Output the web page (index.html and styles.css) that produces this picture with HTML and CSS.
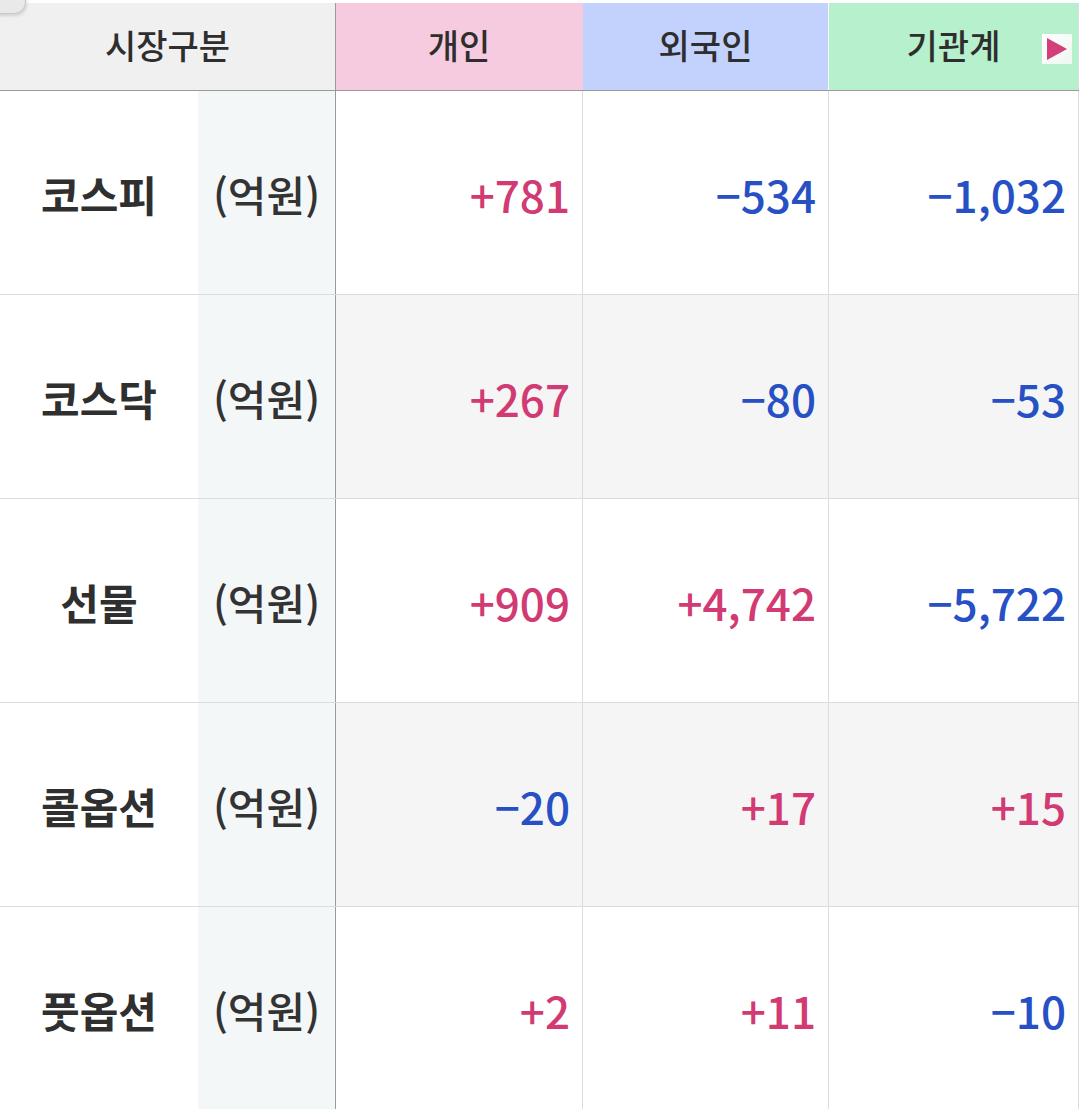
FILE: index.html
```html
<!DOCTYPE html>
<html lang="ko">
<head>
<meta charset="utf-8">
<title>투자자별 매매동향</title>
<link rel="stylesheet" href="styles.css">
</head>
<body>
<div class="board">
  <div class="corner"></div>
  <div class="row head">
    <div class="cell hd market">시장구분</div>
    <div class="cell hd indiv">개인</div>
    <div class="cell hd foreign">외국인</div>
    <div class="cell hd inst">기관계<span class="next"><svg viewBox="0 0 30 30" width="30" height="30"><polygon points="5,4 25,15 5,26" fill="#d33f79"/></svg></span></div>
  </div>
  <div class="row">
    <div class="cell name">코스피</div><div class="cell unit">(억원)</div>
    <div class="cell num up">+781</div><div class="cell num dn">−534</div><div class="cell num dn">−1,032</div>
  </div>
  <div class="row alt">
    <div class="cell name">코스닥</div><div class="cell unit">(억원)</div>
    <div class="cell num up">+267</div><div class="cell num dn">−80</div><div class="cell num dn">−53</div>
  </div>
  <div class="row">
    <div class="cell name">선물</div><div class="cell unit">(억원)</div>
    <div class="cell num up">+909</div><div class="cell num up">+4,742</div><div class="cell num dn">−5,722</div>
  </div>
  <div class="row alt">
    <div class="cell name">콜옵션</div><div class="cell unit">(억원)</div>
    <div class="cell num dn">−20</div><div class="cell num up">+17</div><div class="cell num up">+15</div>
  </div>
  <div class="row">
    <div class="cell name">풋옵션</div><div class="cell unit">(억원)</div>
    <div class="cell num up">+2</div><div class="cell num up">+11</div><div class="cell num dn">−10</div>
  </div>
</div>
</body>
</html>
```
FILE: styles.css
```css
* { box-sizing: border-box; }
html, body { margin: 0; padding: 0; background: #fff; }
body {
  font-family: "Noto Sans CJK KR", "Noto Sans", sans-serif;
  color: #333;
  overflow: hidden;
}
.board {
  position: relative;
  width: 1079px;
  padding-top: 3px;
}
.corner {
  position: absolute;
  left: -12px;
  top: -14px;
  width: 38px;
  height: 28px;
  background: #e9e9e9;
  border: 1px solid #c8c8c8;
  border-radius: 0 0 12px 0;
  box-shadow: 1px 2px 3px rgba(0,0,0,0.12);
  z-index: 2;
}
.row {
  display: grid;
  grid-template-columns: 198px 138px 247px 246px 250px;
  height: 204px;
  border-bottom: 1px solid #dcdcdc;
}
.row.head {
  grid-template-columns: 336px 247px 246px 250px;
  height: 88px;
  border-bottom: 1px solid #9a9a9a;
}
.cell {
  display: flex;
  align-items: center;
  border-right: 1px solid #dcdcdc;
}
.hd {
  justify-content: center;
  font-size: 34px;
  font-weight: 500;
  color: #2e2e2e;
  position: relative;
  padding-bottom: 4px;
}
.market { background: #f0f0f0; border-right-color: #9a9a9a; }
.indiv { background: #f7cbdf; border-right-color: #f7cbdf; }
.foreign { background: #c3d2fd; border-right-color: #ffffff; }
.inst { background: #b7f0cc; border-right-color: #dcdcdc; }
.next {
  position: absolute;
  right: 6px;
  top: 31px;
  width: 30px;
  height: 30px;
  background: linear-gradient(135deg, #ffffff, #eef7f1);
  display: flex;
}
.name {
  justify-content: center;
  font-size: 42px;
  font-weight: 700;
  color: #2f2f2f;
  border-right: none;
  padding-top: 2px;
}
.unit {
  justify-content: center;
  background: #f4f7f8;
  font-size: 42px;
  font-weight: 500;
  color: #333;
  border-right-color: #9a9a9a;
  padding-top: 2px;
}
.num {
  justify-content: flex-end;
  padding-right: 12px;
  font-size: 44px;
  font-weight: 500;
  padding-top: 2px;
}
.alt .num { background: #f5f5f5; }
.up { color: #d13a72; }
.dn { color: #2650c4; }
```
